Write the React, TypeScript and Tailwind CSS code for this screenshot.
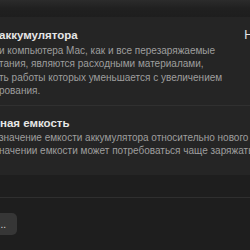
import React from 'react';

const body = 'text-[10px] leading-[13.4px] text-[#9e9e9e] whitespace-nowrap';

export default function App() {
  return (
    <div className="w-[250px] h-[250px] overflow-hidden bg-[#1e1e1e] font-['Liberation_Sans','Inter',sans-serif]">
      <div className="h-[17px] bg-gradient-to-b from-[#2b2b2b] via-[#202020] to-[#1e1e1e]" />
      <div className="bg-[#252525] h-[158px] flex flex-col">
        <div className="relative pt-[10px] h-[88px]">
          <div className="text-[11.5px] leading-[16px] font-bold text-[#e6e6e6] whitespace-nowrap ml-[-1px]">аккумулятора</div>
          <div className="absolute right-[-3px] top-[10px] text-[12px] leading-[16px] text-[#e6e6e6]">Н</div>
          <div className={`${body} mt-[1px] ml-[-1px]`}>
            <div>и компьютера Mac, как и все перезаряжаемые</div>
            <div>тания, являются расходными материалами,</div>
            <div>ть работы которых уменьшается с увеличением</div>
            <div>рования.</div>
          </div>
        </div>
        <div className="h-px bg-[#303030]" />
        <div className="pt-[9px]">
          <div className="text-[11.5px] leading-[16px] font-bold text-[#e6e6e6] whitespace-nowrap">ная емкость</div>
          <div className={`${body} ml-[-1px]`}>
            <div>значение емкости аккумулятора относительно нового</div>
            <div>начении емкости может потребоваться чаще заряжать</div>
          </div>
        </div>
      </div>
      <div className="h-[22px]" />
      <div className="h-px bg-[#2f2f2f]" />
      <div className="pt-[15px]">
        <div className="w-[30px] h-[22px] ml-[-13px] rounded-[5px] bg-[#363636] flex items-center justify-end pr-[11px]">
          <span className="text-[10px] leading-none text-[#d8d8d8] mt-[2px]">..</span>
        </div>
      </div>
    </div>
  );
}
